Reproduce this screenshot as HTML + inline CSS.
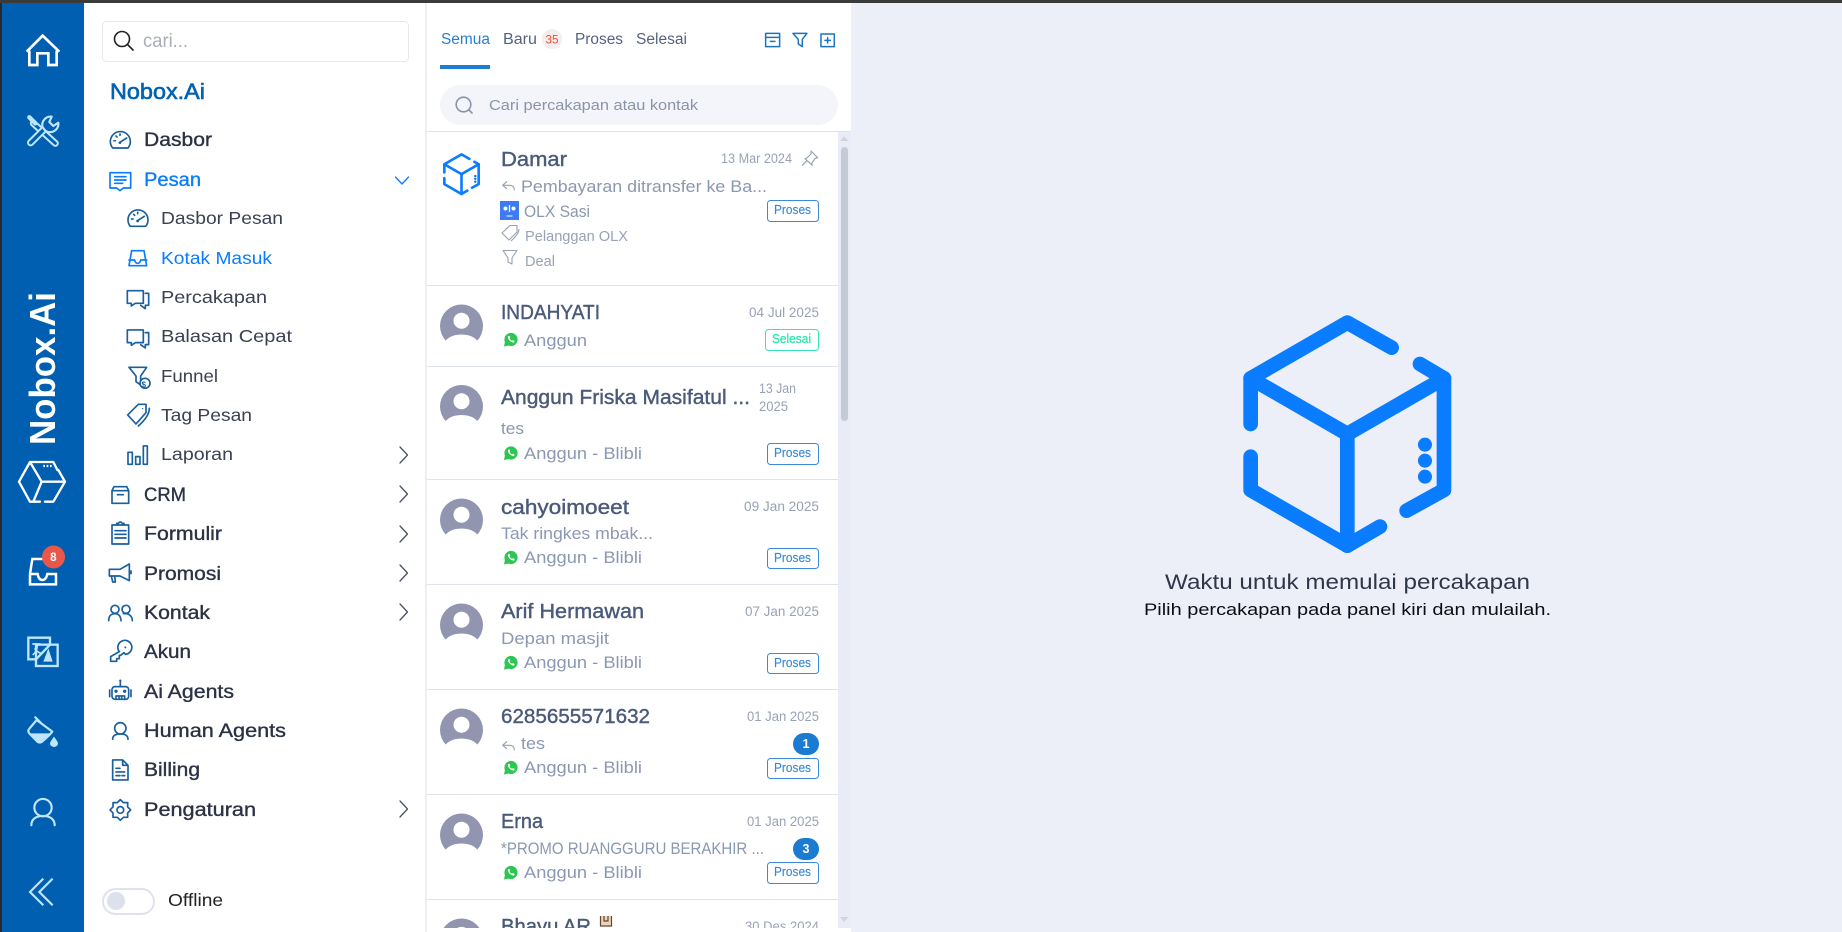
<!DOCTYPE html>
<html lang="id"><head><meta charset="utf-8"><title>Nobox.Ai</title>
<style>
html,body{margin:0;padding:0;background:#eceff8;overflow:hidden}
svg{display:block}
text{font-family:"Liberation Sans",sans-serif;white-space:pre}
.mn{font-size:19px;fill:#2b3244;stroke:#2b3244;stroke-width:.35px}
.sb{font-size:17.5px;fill:#3a4152}
.nm{font-size:20px;fill:#4b5a7a;stroke:#4b5a7a;stroke-width:.4px}
.dt{font-size:13.5px;fill:#98a2b6}
.ms{font-size:17px;fill:#8b98b1}
.ch{font-size:17px;fill:#8b98b1}
.pr{font-size:13px;fill:#3a8ad8;stroke:#3a8ad8;stroke-width:.15px}
.tb{font-size:15.5px;fill:#53637f}
.ic{fill:none;stroke:#1a5f9e;stroke-width:5;stroke-linecap:round;stroke-linejoin:round}
.ib{fill:none;stroke:#0a7cff;stroke-width:5;stroke-linecap:round;stroke-linejoin:round}
.lt{fill:none;stroke:#bfe6ff;stroke-width:6.500;stroke-linecap:round;stroke-linejoin:round}
.wh{fill:none;stroke:#fff;stroke-width:8;stroke-linejoin:miter}
</style></head><body>
<svg width="1842" height="932" viewBox="0 0 1842 932" xmlns="http://www.w3.org/2000/svg">
<defs>
<clipPath id="lc"><rect x="427" y="132" width="411" height="796"/></clipPath>
<g id="cube" fill="none" stroke="#0a7cff" stroke-width="44" stroke-linecap="round" stroke-linejoin="round">
<path d="M785 173L652 98L362 265V402"/><path d="M362 265L652 432L942 265"/><path d="M870 222L942 265V600L830 662"/><path d="M362 500V600L652 767L750 710"/><path d="M652 432V767"/>
<circle cx="885" cy="464" r="21" fill="#0a7cff" stroke="none"/><circle cx="885" cy="512" r="21" fill="#0a7cff" stroke="none"/><circle cx="885" cy="560" r="21" fill="#0a7cff" stroke="none"/>
</g>
<g id="ava"><circle r="21.5" fill="#9195b0"/><circle cy="-5.3" r="8" fill="#fff"/><ellipse cy="19" rx="17.5" ry="10.5" fill="#fff"/><path d="M-22 21H22V25H-22Z" fill="#fff"/></g>
<g id="wa"><circle r="6.6" fill="#2dc653"/><path d="M-6 2L-7 7L-2 6Z" fill="#2dc653"/><path d="M-3 -3.2Q-3.6 -1 -1 1.5Q1.5 3.6 3.2 3L3.6 1.5L2 .6L1 1.3Q-.8 .6 -1.4 -1L-.7 -2L-1.5 -3.6Z" fill="#fff"/></g>
<g id="gauge"><path d="M38 84A30 30 0 1 1 84 84Z" class="ic"/><path d="M58 68L80 54M42 62H46M60 42V46M48 48L51 51" class="ic"/><circle cx="60" cy="68" r="4" fill="#1a5f9e"/></g>
<g id="bub"><path d="M82 512H130V550H106L94 558V550H82Z" class="ic"/><path d="M136 520H146V556H136V566L122 556" class="ic"/></g>
<path id="chev" d="M0 -8L7.500 0L0 8" fill="none" stroke="#4a5364" stroke-width="1.300" stroke-linecap="round" stroke-linejoin="round"/>
<path id="rep" d="M245 545L233 556L245 566M233 556H254Q268 556 268 570" fill="none" stroke="#98a2b6" stroke-width="3.400" stroke-linecap="round" stroke-linejoin="round"/>
</defs>

<rect width="1842" height="932" fill="#eceff8"/>
<rect width="1842" height="3" fill="#3a3a3a"/>
<rect y="3" width="2" height="929" fill="#262a2e"/>
<rect x="2" y="3" width="82" height="929" fill="#005fb0"/>
<rect x="84" y="3" width="341" height="929" fill="#fff"/>
<rect x="425" y="3" width="2" height="929" fill="#eef0f5"/>
<rect x="427" y="3" width="424" height="929" fill="#fff"/>

<!-- rail -->
<g transform="translate(0,20) scale(.3333)">
<path d="M80 95L128 47L178 95M88 92V135H112V100H145V135H170V92" class="wh"/>
<path d="M100 310L166 370" stroke="#bfe6ff" stroke-width="21" stroke-linecap="round"/><path d="M100 310L166 370" stroke="#005fb0" stroke-width="9" stroke-linecap="round"/>
<path d="M88 292L106 310" stroke="#bfe6ff" stroke-width="13" stroke-linecap="round"/>
<path d="M92 368L138 322" stroke="#bfe6ff" stroke-width="22" stroke-linecap="round"/><path d="M92 368L138 322" stroke="#005fb0" stroke-width="10" stroke-linecap="round"/>
<path d="M155 290A25 25 0 0 0 128 322L136 332A25 25 0 0 0 175 308L160 318L148 306Z" fill="#005fb0" stroke="#bfe6ff" stroke-width="6.500" stroke-linejoin="round"/>
</g>
<text transform="translate(55,445) rotate(-90)" font-size="36" font-weight="700" fill="#fff" textLength="153" lengthAdjust="spacingAndGlyphs">Nobox.Ai</text>
<g transform="translate(0,450) scale(.3333)" fill="none" stroke="#fff" stroke-width="7" stroke-linecap="round" stroke-linejoin="round">
<path d="M172 60L160 36H90L57 95L90 155H120M135 155H160L195 95L175 60M90 36L125 95H195M125 95L100 155"/>
<path d="M130 48H155" stroke-dasharray="5 5" stroke-linecap="butt"/>
<path d="M128 327H97L90 372V403H168V372H142Q138 390 127 390Q116 390 113 372H90" stroke-linecap="butt" stroke-linejoin="miter" stroke-width="7.500"/>
</g>
<circle cx="53.500" cy="557" r="11.500" fill="#e8574a"/>
<text x="50.200" y="561" font-size="11.500" font-weight="700" fill="#fff" textLength="6.500" lengthAdjust="spacingAndGlyphs">8</text>
<g transform="translate(0,620) scale(.3333)">
<path d="M108 118H85V53H150V76" fill="none" stroke="#bfe6ff" stroke-width="7"/>
<rect x="108" y="74" width="65" height="64" fill="#005fb0" stroke="#bfe6ff" stroke-width="7"/>
<path d="M108 118L150 74" stroke="#bfe6ff" stroke-width="7"/>
<path d="M145 85L158 125H130Z" fill="#bfe6ff"/>
<path d="M97 72H122M112 72Q112 95 98 105M104 85Q110 95 122 100" fill="none" stroke="#bfe6ff" stroke-width="5"/>
<path d="M110 300L157 335Q150 345 125 366Q118 370 112 365L88 340Q82 333 88 326Z" class="lt"/>
<path d="M106 292L122 308" class="lt"/>
<path d="M92 340H150L122 364Q118 367 114 364Z" fill="#bfe6ff"/>
<path d="M162 350Q174 366 174 370A12 11 0 0 1 150 370Q150 366 162 350Z" fill="#bfe6ff"/>
</g>
<g transform="translate(0,462) scale(.3333)">
<circle cx="129" cy="1037" r="26" class="lt"/>
<path d="M94 1090C94 1070 110 1062 129 1062C148 1062 164 1070 164 1090" class="lt"/>
<path d="M158 1250L118 1290L158 1330M130 1250L90 1290L130 1330" class="lt" style="stroke-linecap:butt;stroke-linejoin:miter"/>
</g>

<!-- menu -->
<rect x="102.500" y="21.500" width="306" height="40" rx="4" fill="#fff" stroke="#e8e8e8"/>
<circle cx="122" cy="39" r="7.500" fill="none" stroke="#222" stroke-width="1.600"/><path d="M127.500 44.500L133 50" stroke="#222" stroke-width="1.600" stroke-linecap="round"/>
<text x="143" y="47" font-size="19" fill="#a9aeb8" textLength="45" lengthAdjust="spacingAndGlyphs">cari...</text>
<text x="110" y="99" font-size="22" fill="#0062b1" stroke="#0062b1" stroke-width=".6" textLength="95" lengthAdjust="spacingAndGlyphs">Nobox.Ai</text>

<text class="mn" x="144" y="146" textLength="68" lengthAdjust="spacingAndGlyphs">Dasbor</text>
<text class="mn" x="144" y="186" textLength="57" lengthAdjust="spacingAndGlyphs" style="fill:#0a7cff;stroke:#0a7cff">Pesan</text>
<text class="sb" x="161" y="224" textLength="122" lengthAdjust="spacingAndGlyphs">Dasbor Pesan</text>
<text class="sb" x="161" y="264" textLength="111" lengthAdjust="spacingAndGlyphs" style="fill:#0a7cff">Kotak Masuk</text>
<text class="sb" x="161" y="303" textLength="106" lengthAdjust="spacingAndGlyphs">Percakapan</text>
<text class="sb" x="161" y="342" textLength="131" lengthAdjust="spacingAndGlyphs">Balasan Cepat</text>
<text class="sb" x="161" y="382" textLength="57" lengthAdjust="spacingAndGlyphs">Funnel</text>
<text class="sb" x="161" y="421" textLength="91" lengthAdjust="spacingAndGlyphs">Tag Pesan</text>
<text class="sb" x="161" y="460" textLength="72" lengthAdjust="spacingAndGlyphs">Laporan</text>
<text class="mn" x="144" y="501" textLength="42" lengthAdjust="spacingAndGlyphs">CRM</text>
<text class="mn" x="144" y="540" textLength="78" lengthAdjust="spacingAndGlyphs">Formulir</text>
<text class="mn" x="144" y="580" textLength="77" lengthAdjust="spacingAndGlyphs">Promosi</text>
<text class="mn" x="144" y="619" textLength="66" lengthAdjust="spacingAndGlyphs">Kontak</text>
<text class="mn" x="144" y="658" textLength="47" lengthAdjust="spacingAndGlyphs">Akun</text>
<text class="mn" x="144" y="698" textLength="90" lengthAdjust="spacingAndGlyphs">Ai Agents</text>
<text class="mn" x="144" y="737" textLength="142" lengthAdjust="spacingAndGlyphs">Human Agents</text>
<text class="mn" x="144" y="776" textLength="56" lengthAdjust="spacingAndGlyphs">Billing</text>
<text class="mn" x="144" y="816" textLength="112" lengthAdjust="spacingAndGlyphs">Pengaturan</text>

<path d="M395.500 177L402 184L408.500 177" fill="none" stroke="#0a7cff" stroke-width="1.300" stroke-linecap="round" stroke-linejoin="round"/>
<use href="#chev" x="400" y="455"/><use href="#chev" x="400" y="494"/><use href="#chev" x="400" y="534"/><use href="#chev" x="400" y="573"/><use href="#chev" x="400" y="612"/><use href="#chev" x="400" y="809"/>

<g transform="translate(100,120) scale(.3333)">
<use href="#gauge"/><use href="#gauge" x="53" y="235"/>
<path d="M30 158H92V204H70L60 212L50 204H30ZM44 170H78M44 180H78M44 190H68" class="ib"/>
<path d="M95 392L87 437H140L132 392ZM87 420H104Q106 430 113 430Q120 430 122 420H140" class="ib"/>
<use href="#bub"/><use href="#bub" y="118"/>
<path d="M87 742H140L122 768V795L108 785V768Z" class="ic"/>
<circle cx="135" cy="790" r="15" fill="#fff" stroke="#1a5f9e" stroke-width="5"/>
<path d="M83 885L115 853H138V878L108 912ZM148 865C148 885 130 905 115 918" class="ic"/>
<circle cx="128" cy="866" r="2" fill="#1a5f9e"/>
<path d="M84 997H97V1033H84ZM107 1010H120V1033H107ZM130 978H142V1033H130Z" class="ic"/>
</g>
<text x="141.500" y="387.500" font-size="8" font-weight="700" fill="#1a5f9e" textLength="4.500" lengthAdjust="spacingAndGlyphs">$</text>

<g transform="translate(100,470) scale(.3333)">
<path d="M36 62H86V100H36ZM36 62L42 50H80L86 62M52 74H70" class="ic"/>
<path d="M36 165H86V222H36ZM50 165V160H55Q61 152 67 160H72V165M45 182H78M45 193H78M45 204H78" class="ic"/>
<path d="M28 298H60L88 282V332L60 318H28ZM34 318L38 336H46L44 318M93 303V311" class="ic"/>
<circle cx="45" cy="418" r="12" class="ic"/><circle cx="78" cy="418" r="12" class="ic"/>
<path d="M26 452C26 437 35 431 45 431C55 431 62 437 63 452M70 431C85 429 97 437 97 452" class="ic"/>
<path d="M58 545A21 21 0 1 1 76 553L72 548L62 556H58V566H50V574H32V560Z" class="ic"/><circle cx="76" cy="532" r="3" fill="#1a5f9e"/>
<rect x="36" y="650" width="50" height="38" rx="9" class="ic"/><path d="M61 634V650M29 660V680M93 660V680M48 688V678H74V688M57 680V686M65 680V686" class="ic"/>
<circle cx="61" cy="632" r="3.500" fill="#1a5f9e"/><circle cx="48" cy="664" r="5" fill="#1a5f9e"/><circle cx="74" cy="664" r="5" fill="#1a5f9e"/>
<circle cx="61" cy="775" r="17" class="ic"/><path d="M38 808C38 797 47 792 61 792C75 792 84 797 84 808" class="ic"/>
<path d="M38 870H68L84 886V930H38ZM68 870V886H84M48 895H60M48 906H74M48 917H60M66 917H74" class="ic"/>
<polygon points="92,1020 83,1029 83,1042 70,1042 61,1051 52,1042 39,1042 39,1029 30,1020 39,1011 39,998 52,998 61,989 70,998 83,998 83,1011" class="ic"/>
<circle cx="61" cy="1020" r="10" class="ic"/>
</g>

<rect x="103" y="889" width="51" height="25" rx="12.500" fill="#fff" stroke="#dfe2ee" stroke-width="2"/>
<circle cx="116" cy="901" r="9" fill="#dde1ee"/>
<text x="168" y="906" font-size="17.500" fill="#222" textLength="55" lengthAdjust="spacingAndGlyphs">Offline</text>

<!-- chat header -->
<text class="tb" x="441" y="44" textLength="49" lengthAdjust="spacingAndGlyphs" style="fill:#2a80d0">Semua</text>
<text class="tb" x="503" y="44" textLength="34" lengthAdjust="spacingAndGlyphs">Baru</text>
<circle cx="552" cy="39" r="10" fill="#f6eeee"/>
<text x="545.500" y="43.500" font-size="12" fill="#e8503a" textLength="13" lengthAdjust="spacingAndGlyphs">35</text>
<text class="tb" x="575" y="44" textLength="48" lengthAdjust="spacingAndGlyphs">Proses</text>
<text class="tb" x="636" y="44" textLength="51" lengthAdjust="spacingAndGlyphs">Selesai</text>
<rect x="440" y="65" width="50" height="4" fill="#1c7dd3"/>
<g transform="translate(425,0) scale(.3333)" fill="none" stroke="#1d73c0" stroke-width="4.500" stroke-linejoin="round" stroke-linecap="round">
<path d="M1022 100H1064V140H1022ZM1022 112H1064M1036 124H1050"/>
<path d="M1104 100H1146L1132 118V140L1120 132V118Z"/>
<path d="M1188 102H1228V140H1188ZM1208 113V129M1200 121H1216"/>
</g>
<rect x="440" y="85" width="398" height="40" rx="20" fill="#f3f5fa"/>
<circle cx="463.500" cy="104.500" r="7.300" fill="none" stroke="#8a95a8" stroke-width="1.600"/><path d="M469 110L472 113" stroke="#8a95a8" stroke-width="1.600" stroke-linecap="round"/>
<text x="489" y="110" font-size="15" fill="#8a94a8" textLength="209" lengthAdjust="spacingAndGlyphs">Cari percakapan atau kontak</text>
<rect x="427" y="131" width="424" height="1" fill="#dfe3ec"/>

<!-- scrollbar -->
<rect x="838" y="132" width="13" height="796" fill="#e9ecf6"/>
<rect x="841" y="147" width="7" height="274" rx="3.500" fill="#c5cad8"/>
<path d="M840 141H848.500L844.200 136.500Z" fill="#d0d4df"/><path d="M840 917H848.500L844.200 922Z" fill="#d0d4df"/>

<!-- list -->
<g clip-path="url(#lc)">
<g fill="#dfe3ec"><rect x="427" y="285" width="411" height="1"/><rect x="427" y="366" width="411" height="1"/><rect x="427" y="479" width="411" height="1"/><rect x="427" y="584" width="411" height="1"/><rect x="427" y="689" width="411" height="1"/><rect x="427" y="794" width="411" height="1"/><rect x="427" y="899" width="411" height="1"/></g>

<!-- Damar -->
<g transform="translate(422.900,148.600) scale(.0592)"><use href="#cube"/></g>
<text class="nm" x="501" y="166" textLength="66" lengthAdjust="spacingAndGlyphs">Damar</text>
<text class="dt" x="721" y="163" textLength="71" lengthAdjust="spacingAndGlyphs">13 Mar 2024</text>
<g transform="translate(425,0) scale(.3333)" fill="none" stroke="#98a2b6" stroke-width="3.500" stroke-linejoin="round" stroke-linecap="round"><path d="M1158 453L1178 473L1170 476L1160 490L1162 496L1140 476L1146 474L1158 462ZM1146 482L1132 496"/></g>
<g transform="translate(425,0) scale(.3333)"><use href="#rep"/></g>
<text class="ms" x="521" y="192" textLength="246" lengthAdjust="spacingAndGlyphs">Pembayaran ditransfer ke Ba...</text>
<rect x="500" y="201" width="19" height="19" fill="#3d7bf5"/>
<circle cx="505.500" cy="208.500" r="2" fill="#fff"/><circle cx="513.500" cy="208.500" r="2" fill="#fff"/><path d="M509.500 205V212" stroke="#fff" stroke-width="1.200"/><path d="M506.500 216H512.500" stroke="#fff" stroke-width="1"/>
<text class="ch" x="524" y="217" textLength="66" lengthAdjust="spacingAndGlyphs">OLX Sasi</text>
<path d="M502 233L510 225.500H517V232L509 240ZM519 229Q519 234 511 241" fill="none" stroke="#98a2b6" stroke-width="1.100" stroke-linejoin="round"/>
<text x="525" y="241" font-size="15" fill="#98a2b6" textLength="103" lengthAdjust="spacingAndGlyphs">Pelanggan OLX</text>
<path d="M503 250.500H517L512 258V264L508 262V258Z" fill="none" stroke="#98a2b6" stroke-width="1.100" stroke-linejoin="round"/>
<text x="525" y="266" font-size="15" fill="#98a2b6" textLength="30" lengthAdjust="spacingAndGlyphs">Deal</text>
<rect x="767.500" y="200.500" width="51" height="21" rx="3" fill="#fff" stroke="#3a8ad8"/>
<text class="pr" x="774" y="214" textLength="37" lengthAdjust="spacingAndGlyphs">Proses</text>

<!-- Indahyati -->
<use href="#ava" x="461.500" y="326"/>
<text class="nm" x="501" y="319" textLength="99" lengthAdjust="spacingAndGlyphs">INDAHYATI</text>
<text class="dt" x="749" y="317" textLength="70" lengthAdjust="spacingAndGlyphs">04 Jul 2025</text>
<use href="#wa" x="511" y="339.500"/>
<text class="ch" x="524" y="346" textLength="63" lengthAdjust="spacingAndGlyphs">Anggun</text>
<rect x="765.500" y="329.500" width="53" height="21" rx="3" fill="#fff" stroke="#3ae3b4"/>
<text class="pr" x="772" y="343" textLength="39" lengthAdjust="spacingAndGlyphs" style="fill:#2ee6ad;stroke:#2ee6ad;stroke-width:.3px">Selesai</text>

<!-- Anggun Friska -->
<use href="#ava" x="461.500" y="406.500"/>
<text class="nm" x="501" y="404" textLength="249" lengthAdjust="spacingAndGlyphs">Anggun Friska Masifatul ...</text>
<text class="dt" x="759" y="393" textLength="37" lengthAdjust="spacingAndGlyphs">13 Jan</text>
<text class="dt" x="759" y="411" textLength="29" lengthAdjust="spacingAndGlyphs">2025</text>
<text class="ms" x="501" y="434" textLength="23" lengthAdjust="spacingAndGlyphs">tes</text>
<use href="#wa" x="511" y="453"/>
<text class="ch" x="524" y="459" textLength="118" lengthAdjust="spacingAndGlyphs">Anggun - Blibli</text>
<rect x="767.500" y="443.500" width="51" height="21" rx="3" fill="#fff" stroke="#3a8ad8"/>
<text class="pr" x="774" y="457" textLength="37" lengthAdjust="spacingAndGlyphs">Proses</text>

<!-- cahyoimoeet -->
<use href="#ava" x="461.500" y="520"/>
<text class="nm" x="501" y="514" textLength="128" lengthAdjust="spacingAndGlyphs">cahyoimoeet</text>
<text class="dt" x="744" y="511" textLength="75" lengthAdjust="spacingAndGlyphs">09 Jan 2025</text>
<text class="ms" x="501" y="539" textLength="152" lengthAdjust="spacingAndGlyphs">Tak ringkes mbak...</text>
<use href="#wa" x="511" y="557.500"/>
<text class="ch" x="524" y="563" textLength="118" lengthAdjust="spacingAndGlyphs">Anggun - Blibli</text>
<rect x="767.500" y="548.500" width="51" height="20" rx="3" fill="#fff" stroke="#3a8ad8"/>
<text class="pr" x="774" y="562" textLength="37" lengthAdjust="spacingAndGlyphs">Proses</text>

<!-- Arif -->
<use href="#ava" x="461.500" y="625"/>
<text class="nm" x="501" y="618" textLength="143" lengthAdjust="spacingAndGlyphs">Arif Hermawan</text>
<text class="dt" x="745" y="616" textLength="74" lengthAdjust="spacingAndGlyphs">07 Jan 2025</text>
<text class="ms" x="501" y="644" textLength="108" lengthAdjust="spacingAndGlyphs">Depan masjit</text>
<use href="#wa" x="511" y="662.500"/>
<text class="ch" x="524" y="668" textLength="118" lengthAdjust="spacingAndGlyphs">Anggun - Blibli</text>
<rect x="767.500" y="653.500" width="51" height="20" rx="3" fill="#fff" stroke="#3a8ad8"/>
<text class="pr" x="774" y="667" textLength="37" lengthAdjust="spacingAndGlyphs">Proses</text>

<!-- 6285 -->
<use href="#ava" x="461.500" y="730"/>
<text class="nm" x="501" y="723" textLength="149" lengthAdjust="spacingAndGlyphs">6285655571632</text>
<text class="dt" x="747" y="721" textLength="72" lengthAdjust="spacingAndGlyphs">01 Jan 2025</text>
<g transform="translate(425,560) scale(.3333)"><use href="#rep"/></g>
<text class="ms" x="521" y="749" textLength="24" lengthAdjust="spacingAndGlyphs">tes</text>
<rect x="793" y="733" width="26" height="22" rx="11" fill="#1a7bd0"/>
<text x="802.500" y="748" font-size="12.500" font-weight="700" fill="#fff" textLength="7" lengthAdjust="spacingAndGlyphs">1</text>
<use href="#wa" x="511" y="767.500"/>
<text class="ch" x="524" y="773" textLength="118" lengthAdjust="spacingAndGlyphs">Anggun - Blibli</text>
<rect x="767.500" y="758.500" width="51" height="20" rx="3" fill="#fff" stroke="#3a8ad8"/>
<text class="pr" x="774" y="772" textLength="37" lengthAdjust="spacingAndGlyphs">Proses</text>

<!-- Erna -->
<use href="#ava" x="461.500" y="835"/>
<text class="nm" x="501" y="828" textLength="42" lengthAdjust="spacingAndGlyphs">Erna</text>
<text class="dt" x="747" y="826" textLength="72" lengthAdjust="spacingAndGlyphs">01 Jan 2025</text>
<text class="ms" x="501" y="854" textLength="263" lengthAdjust="spacingAndGlyphs">*PROMO RUANGGURU BERAKHIR ...</text>
<rect x="793" y="838" width="26" height="22" rx="11" fill="#1a7bd0"/>
<text x="802.500" y="853" font-size="12.500" font-weight="700" fill="#fff" textLength="7" lengthAdjust="spacingAndGlyphs">3</text>
<use href="#wa" x="511" y="872.500"/>
<text class="ch" x="524" y="878" textLength="118" lengthAdjust="spacingAndGlyphs">Anggun - Blibli</text>
<rect x="767.500" y="862.500" width="51" height="21" rx="3" fill="#fff" stroke="#3a8ad8"/>
<text class="pr" x="774" y="876" textLength="37" lengthAdjust="spacingAndGlyphs">Proses</text>

<!-- Bhayu -->
<use href="#ava" x="461.500" y="940"/>
<text class="nm" x="501" y="933" textLength="90" lengthAdjust="spacingAndGlyphs">Bhayu AR</text>
<path d="M600.500 916V926H611.500V916M604 916V921H608V916" fill="#f0d3b8" stroke="#5a4a3a" stroke-width="1.200"/>
<text class="dt" x="745" y="931" textLength="74" lengthAdjust="spacingAndGlyphs">30 Des 2024</text>
</g>

<!-- right -->
<g transform="translate(1130,290) scale(.3333)"><use href="#cube"/></g>
<text x="1165" y="589" font-size="21.500" fill="#2e3648" textLength="365" lengthAdjust="spacingAndGlyphs">Waktu untuk memulai percakapan</text>
<text x="1144" y="615" font-size="17" fill="#0b0d14" textLength="407" lengthAdjust="spacingAndGlyphs">Pilih percakapan pada panel kiri dan mulailah.</text>
</svg>
</body></html>
